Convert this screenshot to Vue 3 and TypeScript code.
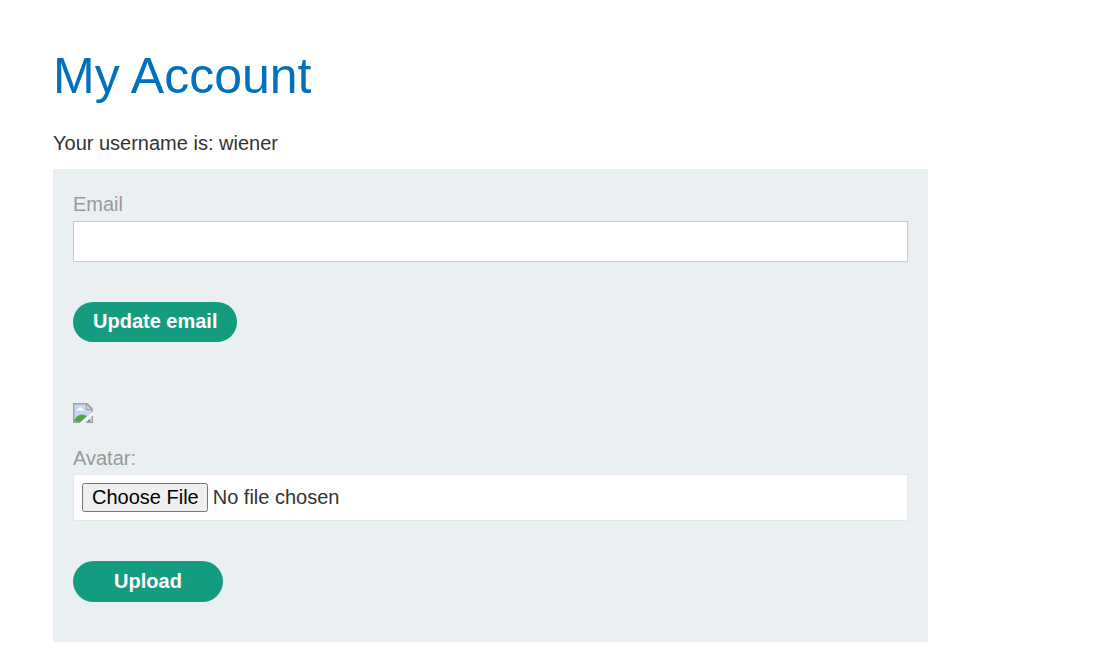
<script setup lang="ts">
import { ref } from 'vue'

const username = 'wiener'
const email = ref('')
</script>

<template>
  <main class="page">
    <h1>My Account</h1>
    <p class="user">Your username is: {{ username }}</p>
    <div class="panel">
      <form class="email-form" @submit.prevent>
        <label for="email">Email</label>
        <input id="email" v-model="email" class="field" type="email" />
        <button class="button" type="submit">Update email</button>
      </form>
      <form class="avatar-form" @submit.prevent>
        <svg class="avatar" viewBox="0 0 20 20" aria-hidden="true">
          <path d="M1 1H14L19 6V9.5L8.5 19H1Z" fill="#c6d7f5" />
          <path d="M3.5 7.5C3.5 6 5 5.5 6 5.5C6.5 3.5 8.5 4 8.5 5.5C10 5.5 10.5 6.5 10.5 7.5Z" fill="#fff" />
          <path d="M1 19V17.5C4 11.5 9 10 14 13L7.5 19Z" fill="#4fa63f" />
          <path d="M13.5 19L19 13.5V19Z" fill="#c6d7f5" />
          <path d="M13.5 19L16.5 16L17.5 19Z" fill="#4fa63f" />
          <path d="M7 20L20 8.5V12L12 20Z" fill="#f1f5f7" />
          <path d="M7 19.3H0.7V0.7H14L19.3 6V9M19.3 13V19.3H13" fill="none" stroke="#a3a3a3" stroke-width="1.4" />
          <path d="M13.5 1V6.5H19Z" fill="#e8e8e8" stroke="#a3a3a3" stroke-width="1.4" />
        </svg>
        <label for="avatar">Avatar:</label>
        <input id="avatar" class="field file" type="file" />
        <button class="button" type="submit">Upload</button>
      </form>
    </div>
  </main>
</template>

<style>
body {
  margin: 0;
  background: #fff;
}
</style>

<style scoped>
.page {
  margin: 46px 181px 0 53px;
  font: 20px/28px "Liberation Sans", Arial, sans-serif;
  color: #333332;
}

h1 {
  margin: 0;
  font-size: 50px;
  line-height: 60px;
  font-weight: 400;
  color: #0071bc;
}

.user {
  margin: 23px 0 12px;
}

.panel {
  padding: 21px 20px 40px;
  background: #eaf0f2;
}

form {
  display: flex;
  flex-direction: column;
  align-items: flex-start;
}

.avatar-form {
  margin-top: 61px;
}

label {
  color: #999;
}

.field {
  box-sizing: border-box;
  width: 100%;
  height: 41px;
  margin: 3px 0 40px;
  padding: 8px;
  border: 1px solid #c8cccf;
  background: #fff;
  color: #333332;
  font: inherit;
}

.file {
  height: 47px;
  margin-top: 2px;
  border-color: #e3e5e6;
}

.file::file-selector-button {
  margin-right: 5px;
  padding: 1px 7px 1px 8px;
}

.button {
  min-width: 150px;
  height: 40px;
  padding: 0 20px 2px;
  border: 0;
  border-radius: 21px;
  background: #159c80;
  color: #fff;
  font: bold 20px/28px "Liberation Sans", Arial, sans-serif;
}

.avatar-form .button {
  height: 41px;
  padding-bottom: 1px;
}

.avatar {
  width: 20px;
  height: 20px;
  margin-bottom: 21px;
}
</style>
